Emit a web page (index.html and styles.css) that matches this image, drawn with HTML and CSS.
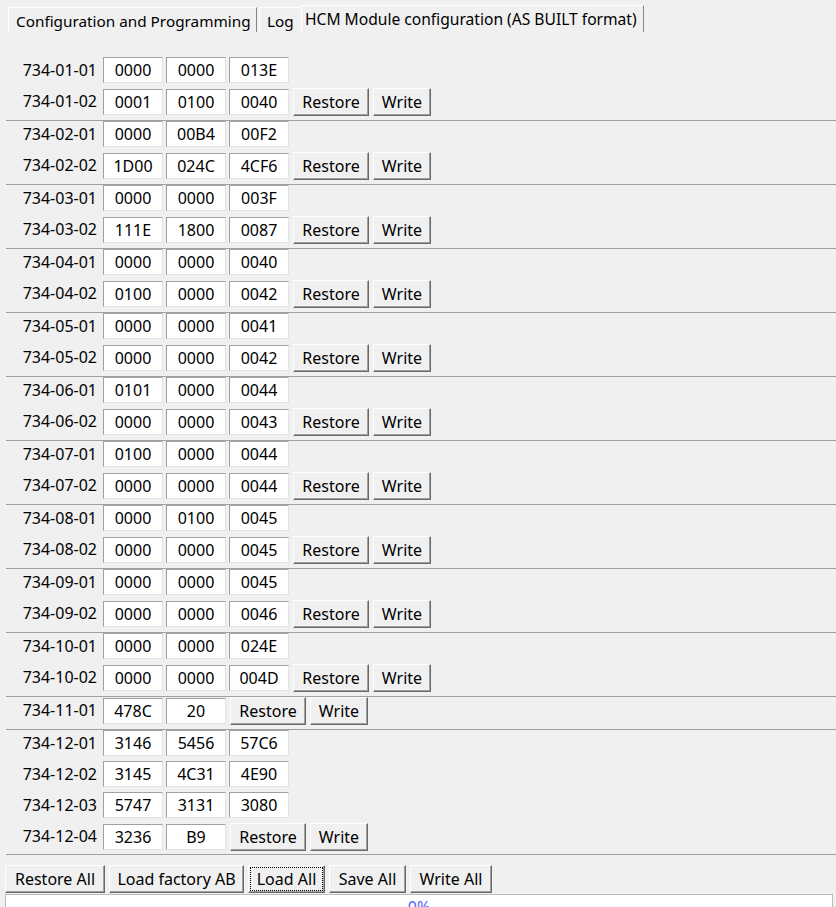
FILE: index.html
```html
<!DOCTYPE html>
<html lang="en">
<head>
<meta charset="utf-8">
<title>HCM Module configuration</title>
<link rel="stylesheet" href="styles.css">
</head>
<body>
<div class="tabs">
  <div class="tab tab-config">Configuration and Programming</div>
  <div class="tab tab-log">Log</div>
  <div class="tab tab-active">HCM Module configuration (AS BUILT format)</div>
</div>

<div class="groups">
  <div class="group">
    <div class="row"><span class="label">734-01-01</span><input class="entry" value="0000"><input class="entry" value="0000"><input class="entry" value="013E"></div>
    <div class="row has-btns"><span class="label">734-01-02</span><input class="entry" value="0001"><input class="entry" value="0100"><input class="entry" value="0040"><div class="actions"><button class="btn btn-restore">Restore</button><button class="btn btn-write">Write</button></div></div>
  </div>
  <div class="group">
    <div class="row"><span class="label">734-02-01</span><input class="entry" value="0000"><input class="entry" value="00B4"><input class="entry" value="00F2"></div>
    <div class="row has-btns"><span class="label">734-02-02</span><input class="entry" value="1D00"><input class="entry" value="024C"><input class="entry" value="4CF6"><div class="actions"><button class="btn btn-restore">Restore</button><button class="btn btn-write">Write</button></div></div>
  </div>
  <div class="group">
    <div class="row"><span class="label">734-03-01</span><input class="entry" value="0000"><input class="entry" value="0000"><input class="entry" value="003F"></div>
    <div class="row has-btns"><span class="label">734-03-02</span><input class="entry" value="111E"><input class="entry" value="1800"><input class="entry" value="0087"><div class="actions"><button class="btn btn-restore">Restore</button><button class="btn btn-write">Write</button></div></div>
  </div>
  <div class="group">
    <div class="row"><span class="label">734-04-01</span><input class="entry" value="0000"><input class="entry" value="0000"><input class="entry" value="0040"></div>
    <div class="row has-btns"><span class="label">734-04-02</span><input class="entry" value="0100"><input class="entry" value="0000"><input class="entry" value="0042"><div class="actions"><button class="btn btn-restore">Restore</button><button class="btn btn-write">Write</button></div></div>
  </div>
  <div class="group">
    <div class="row"><span class="label">734-05-01</span><input class="entry" value="0000"><input class="entry" value="0000"><input class="entry" value="0041"></div>
    <div class="row has-btns"><span class="label">734-05-02</span><input class="entry" value="0000"><input class="entry" value="0000"><input class="entry" value="0042"><div class="actions"><button class="btn btn-restore">Restore</button><button class="btn btn-write">Write</button></div></div>
  </div>
  <div class="group">
    <div class="row"><span class="label">734-06-01</span><input class="entry" value="0101"><input class="entry" value="0000"><input class="entry" value="0044"></div>
    <div class="row has-btns"><span class="label">734-06-02</span><input class="entry" value="0000"><input class="entry" value="0000"><input class="entry" value="0043"><div class="actions"><button class="btn btn-restore">Restore</button><button class="btn btn-write">Write</button></div></div>
  </div>
  <div class="group">
    <div class="row"><span class="label">734-07-01</span><input class="entry" value="0100"><input class="entry" value="0000"><input class="entry" value="0044"></div>
    <div class="row has-btns"><span class="label">734-07-02</span><input class="entry" value="0000"><input class="entry" value="0000"><input class="entry" value="0044"><div class="actions"><button class="btn btn-restore">Restore</button><button class="btn btn-write">Write</button></div></div>
  </div>
  <div class="group">
    <div class="row"><span class="label">734-08-01</span><input class="entry" value="0000"><input class="entry" value="0100"><input class="entry" value="0045"></div>
    <div class="row has-btns"><span class="label">734-08-02</span><input class="entry" value="0000"><input class="entry" value="0000"><input class="entry" value="0045"><div class="actions"><button class="btn btn-restore">Restore</button><button class="btn btn-write">Write</button></div></div>
  </div>
  <div class="group">
    <div class="row"><span class="label">734-09-01</span><input class="entry" value="0000"><input class="entry" value="0000"><input class="entry" value="0045"></div>
    <div class="row has-btns"><span class="label">734-09-02</span><input class="entry" value="0000"><input class="entry" value="0000"><input class="entry" value="0046"><div class="actions"><button class="btn btn-restore">Restore</button><button class="btn btn-write">Write</button></div></div>
  </div>
  <div class="group">
    <div class="row"><span class="label">734-10-01</span><input class="entry" value="0000"><input class="entry" value="0000"><input class="entry" value="024E"></div>
    <div class="row has-btns"><span class="label">734-10-02</span><input class="entry" value="0000"><input class="entry" value="0000"><input class="entry" value="004D"><div class="actions"><button class="btn btn-restore">Restore</button><button class="btn btn-write">Write</button></div></div>
  </div>
  <div class="group">
    <div class="row has-btns"><span class="label">734-11-01</span><input class="entry" value="478C"><input class="entry" value="20"><div class="actions"><button class="btn btn-restore">Restore</button><button class="btn btn-write">Write</button></div></div>
  </div>
  <div class="group">
    <div class="row"><span class="label">734-12-01</span><input class="entry" value="3146"><input class="entry" value="5456"><input class="entry" value="57C6"></div>
    <div class="row"><span class="label">734-12-02</span><input class="entry" value="3145"><input class="entry" value="4C31"><input class="entry" value="4E90"></div>
    <div class="row"><span class="label">734-12-03</span><input class="entry" value="5747"><input class="entry" value="3131"><input class="entry" value="3080"></div>
    <div class="row has-btns"><span class="label">734-12-04</span><input class="entry" value="3236"><input class="entry" value="B9"><div class="actions"><button class="btn btn-restore">Restore</button><button class="btn btn-write">Write</button></div></div>
  </div>
</div>

<div class="footer">
  <div class="footer-line"></div>
  <div class="toolbar">
    <button class="btn btn-restore-all">Restore All</button>
    <button class="btn btn-factory">Load factory AB</button>
    <button class="btn btn-load-all btn-focus">Load All</button>
    <button class="btn btn-save-all">Save All</button>
    <button class="btn btn-write-all">Write All</button>
  </div>
  <div class="progress">0%</div>
</div>
</body>
</html>
```

FILE: styles.css
```css
html, body {
  margin: 0;
  height: 907px;
  overflow: hidden;
  background: #f0f0f0;
}

body {
  box-sizing: border-box;
  padding-top: 5px;
  font-family: "Noto Sans", "DejaVu Sans", sans-serif;
  font-size: 16px;
  color: #000;
}

/* Tabs */
.tabs {
  display: flex;
  align-items: flex-end;
  height: 27px;
  padding-left: 8px;
  font-size: 15.3px;
}

.tab {
  box-sizing: border-box;
  height: 25px;
  padding: 2px 0 0 7px;
  line-height: 22px;
  white-space: nowrap;
  overflow: hidden;
  border-top: 1px solid #fff;
  border-left: 1px solid #fff;
  border-right: 1px solid #888;
}

.tab-config {
  width: 249px;
  margin-right: 2px;
}

.tab-log {
  width: 42px;
  border-right: none;
}

.tab-active {
  width: 343px;
  height: 27px;
  padding: 0 0 0 3px;
  line-height: 26px;
  font-size: 15.6px;
}

/* Groups of rows */
.groups {
  margin: 24px 0 0 6px;
}

.group {
  border-top: 1px solid #a0a0a0;
}

.group:first-child {
  border-top-color: transparent;
}

.row {
  display: flex;
  align-items: flex-start;
  gap: 3px;
  height: 31px;
}

.row.has-btns {
  height: 32px;
}

.row.has-btns .entry {
  margin-top: 1px;
}

.label {
  width: 91px;
  margin-right: 3px;
  text-align: right;
  line-height: 26px;
  white-space: nowrap;
}

.entry {
  box-sizing: border-box;
  width: 60px;
  height: 26px;
  margin: 0;
  padding: 0;
  border: 1px solid;
  border-color: #a0a0a0 #e3e3e3 #e3e3e3 #a0a0a0;
  background: #fff;
  font: inherit;
  color: #000;
  text-align: center;
  outline: none;
}

.actions {
  display: flex;
  gap: 4px;
  margin-left: 1px;
}

.btn {
  box-sizing: border-box;
  height: 28px;
  margin: 0;
  padding: 0;
  font: inherit;
  color: #000;
  background: #f0f0f0;
  border: 1px solid;
  border-color: #fff #696969 #696969 #fff;
  box-shadow: inset -1px -1px 0 #a0a0a0;
  white-space: nowrap;
}

.btn-restore { width: 76px; }
.btn-write { width: 58px; }

/* Footer */
.footer {
  margin-top: -1px;
}

.footer-line {
  margin-left: 6px;
  border-top: 1px solid #a0a0a0;
}

.toolbar {
  display: flex;
  gap: 4px;
  padding: 10px 0 0 5px;
}

.btn-restore-all { width: 100px; }
.btn-factory { width: 135px; }
.btn-load-all { width: 77px; }
.btn-save-all { width: 77px; }
.btn-write-all { width: 82px; }

.btn-focus {
  outline: 1px dotted #000;
  outline-offset: -3px;
}

.progress {
  box-sizing: border-box;
  height: 30px;
  margin: 1px 3px 0 5px;
  border: 1px solid #bcbcbc;
  background: #fff;
  text-align: center;
  line-height: 24px;
  color: #5a5aff;
}
```
